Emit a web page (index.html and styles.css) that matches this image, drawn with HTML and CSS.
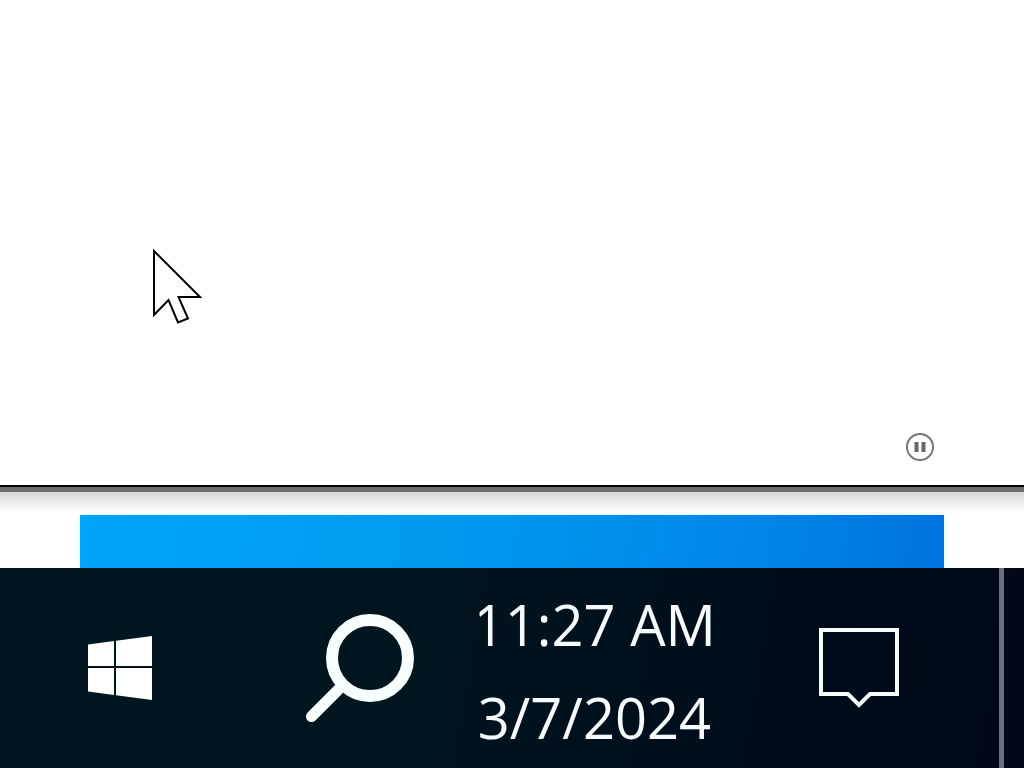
FILE: index.html
```html
<!DOCTYPE html>
<html lang="en">
<head>
    <meta charset="UTF-8">
    <meta name="viewport" content="width=device-width, initial-scale=1.0">
    <title>Desktop</title>
    <link rel="stylesheet" href="styles.css">
</head>
<body>

<main class="window">
    <svg class="cursor" viewBox="0 0 52 78" aria-hidden="true">
        <path d="M2 3V67L16.500 52L26 74.500L36 70.500L26.500 49H48Z"/>
    </svg>
    <button class="pause" aria-label="Pause">
        <svg viewBox="0 0 28 28">
            <circle cx="14" cy="14" r="13"/>
            <path d="M10.500 9V19M17.500 9V19"/>
        </svg>
    </button>
</main>

<div class="desktop">
    <div class="wallpaper"></div>
</div>

<footer class="taskbar">
    <button class="task" aria-label="Start">
        <svg class="start-icon" viewBox="0 0 64 64">
            <path d="M0 8.500L26 5V30H0ZM28 4.700L64 0V30H28ZM0 32H26V59L0 55.500ZM28 32H64V64L28 59.300Z"/>
        </svg>
    </button>
    <button class="task" aria-label="Search">
        <svg class="search-icon" viewBox="0 0 108 108">
            <circle cx="64" cy="44" r="38"/>
            <path class="handle" d="M36 72L5.500 102.500"/>
        </svg>
    </button>
    <button class="task clock">
        <span>11:27 AM</span>
        <span>3/7/2024</span>
    </button>
    <button class="task" aria-label="Notifications">
        <svg class="note-icon" viewBox="0 0 80 80">
            <path d="M2 2H78V66H51L40 77L29 66H2Z"/>
        </svg>
    </button>
    <button class="show-desktop" aria-label="Show desktop"></button>
</footer>

</body>
</html>
```
FILE: styles.css
```css
* {
    box-sizing: border-box;
}

body {
    display: flex;
    flex-direction: column;
    height: 100vh;
    margin: 0;
    overflow: hidden;
    background-color: #fff;
    font-family: "Open Sans", "Noto Sans", sans-serif;
}

button {
    padding: 0;
    border: none;
    background: none;
    color: inherit;
    font: inherit;
}

svg {
    display: block;
    overflow: visible;
}

.window {
    position: relative;
    flex: 1;
    display: flex;
    justify-content: flex-end;
    align-items: flex-end;
    padding: 24px 90px;
    border-bottom: 2px solid #000;
    background-color: #fff;
}

/* mouse pointer, lies over the window */
.cursor {
    position: absolute;
    left: 152px;
    top: 248px;
    width: 52px;
    height: 78px;
    fill: #fff;
    stroke: #000;
    stroke-width: 2;
}

.pause svg {
    width: 28px;
    height: 28px;
    fill: none;
    stroke: #777;
    stroke-width: 2;
}

.pause path {
    stroke: #666;
    stroke-width: 4;
}

.desktop {
    padding: 23px 80px 0;
    border-top: 5px solid #6e6e6e;
    background: linear-gradient(#d8d8d8, #f0f0f0 12px, #fff 20px);
}

.wallpaper {
    height: 53px;
    background: linear-gradient(100deg, #00a4f8, #009bef 40%, #0087e8 75%, #0074de);
    box-shadow: 0 0 4px #c8f4ff;
}

.taskbar {
    position: relative;
    display: grid;
    grid-template-columns: 6fr 6fr 6fr 7fr 25px;
    height: 200px;
    background: linear-gradient(100deg, #00161f, #00151e 40%, #000c1a 75%, #000816);
    color: #f5fbff;
}

.task {
    display: flex;
    justify-content: center;
    align-items: center;
    min-width: 0;
}

.start-icon {
    width: 64px;
    height: 64px;
    fill: #fff;
}

.search-icon {
    width: 108px;
    height: 108px;
    fill: none;
    stroke: #f8ffff;
    stroke-width: 12;
    stroke-linecap: round;
}

.search-icon .handle {
    stroke-width: 11;
}

/* the clock is wider than its slot, so its left edge is cut */
.clock {
    flex-direction: column;
    padding: 6px 10px 0 0;
    clip-path: inset(0);
    font-size: 56px;
    line-height: 93px;
    white-space: nowrap;
}

.note-icon {
    width: 80px;
    height: 80px;
    fill: none;
    stroke: #f8ffff;
    stroke-width: 4;
}

.show-desktop {
    border-left: 5px solid #687080;
}
```
